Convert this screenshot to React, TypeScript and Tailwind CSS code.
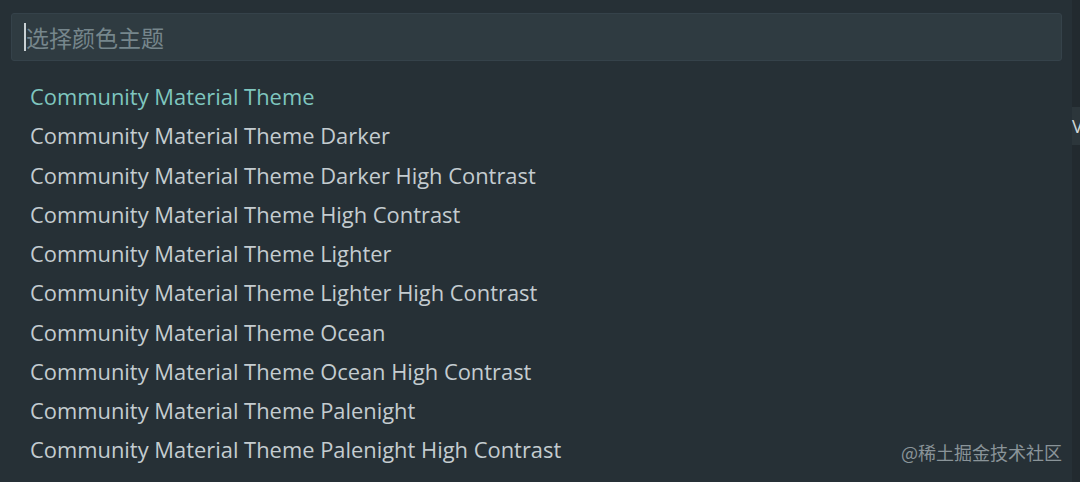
import React from "react";

const items = [
  "Community Material Theme",
  "Community Material Theme Darker",
  "Community Material Theme Darker High Contrast",
  "Community Material Theme High Contrast",
  "Community Material Theme Lighter",
  "Community Material Theme Lighter High Contrast",
  "Community Material Theme Ocean",
  "Community Material Theme Ocean High Contrast",
  "Community Material Theme Palenight",
  "Community Material Theme Palenight High Contrast",
];

export default function App() {
  return (
    <div
      className="relative flex h-[482px] w-[1080px] overflow-hidden bg-[#263036]"
      style={{ fontFamily: '"Open Sans", "Noto Sans CJK SC", sans-serif' }}
    >
      <div className="flex w-[1072px] flex-col">
        <div className="pl-[11px] pr-[10px] pt-[13px]">
          <div className="flex h-[48px] items-center rounded-[3px] border border-[#35424a] bg-[#2f3b41] pl-[12px]">
            <div className="h-[28px] w-[2px] bg-[#c9d1d4]" />
            <span className="text-[23px] text-[#76868c]" style={{ fontFamily: '"Noto Sans CJK SC", sans-serif' }}>
              选择颜色主题
            </span>
          </div>
        </div>
        <div className="flex flex-col pl-[30px] pt-[17px]">
          {items.map((t, i) => (
            <div
              key={t}
              className={`flex h-[39.25px] items-center text-[21.9px] ${i === 0 ? "text-[#7fc6bf]" : "text-[#c4ccd0]"}`}
            >
              {t}
            </div>
          ))}
        </div>
      </div>
      <div className="flex w-[8px] flex-col bg-[#222a2f] pt-[107px]">
        <div className="flex h-[38px] items-center bg-[#2c363b] text-[18px] text-[#d0d6d8]">V</div>
      </div>
      <div
        className="absolute right-[18px] top-[439px] text-[18px] text-[#8a9499]"
        style={{ fontFamily: '"Noto Sans CJK SC", sans-serif' }}
      >
        @稀土掘金技术社区
      </div>
    </div>
  );
}
